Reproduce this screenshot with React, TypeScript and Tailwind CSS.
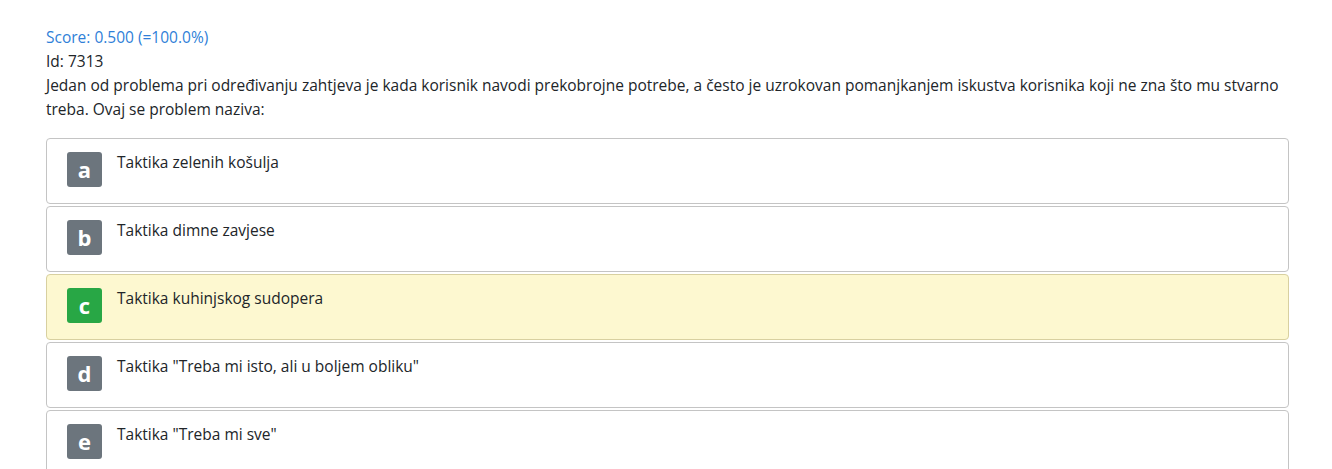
const options = [
  { key: "a", text: "Taktika zelenih košulja" },
  { key: "b", text: "Taktika dimne zavjese" },
  { key: "c", text: "Taktika kuhinjskog sudopera", correct: true },
  { key: "d", text: 'Taktika "Treba mi isto, ali u boljem obliku"' },
  { key: "e", text: 'Taktika "Treba mi sve"' },
];

function Option({ letter, text, correct }: { letter: string; text: string; correct?: boolean }) {
  return (
    <div
      className={
        correct
          ? "flex items-start rounded-[4px] border border-[#d8d0a0] bg-[#fdf8d0] pl-[20px] pt-[13px] pb-[16px]"
          : "flex items-start rounded-[4px] border border-[#c4c4c4] bg-white pl-[20px] pt-[13px] pb-[16px]"
      }
    >
      <div
        className={
          correct
            ? "flex h-[35px] w-[35px] shrink-0 items-center justify-center rounded-[3px] bg-[#28a745] text-[22px] font-bold text-white"
            : "flex h-[35px] w-[35px] shrink-0 items-center justify-center rounded-[3px] bg-[#6c757d] text-[22px] font-bold text-white"
        }
      >
        {letter}
      </div>
      <div className="ml-[15px] -mt-[2px] text-[15.5px] leading-[24px] text-[#212529]">{text}</div>
    </div>
  );
}

export default function App() {
  return (
    <div className="min-h-screen bg-white font-['Open_Sans',sans-serif]">
      <div className="w-[1289px] pl-[46px] pt-[25px]">
        <div className="text-[15.5px] leading-[24px] text-[#2f7fd8]">Score: 0.500 (=100.0%)</div>
        <div className="text-[15.5px] leading-[24px] text-[#212529]">Id: 7313</div>
        <p className="text-[15.5px] leading-[24px] text-[#212529]">
          Jedan od problema pri određivanju zahtjeva je kada korisnik navodi prekobrojne potrebe, a često je uzrokovan
          pomanjkanjem iskustva korisnika koji ne zna što mu stvarno treba. Ovaj se problem naziva:
        </p>
        <div className="mt-[17px] flex flex-col gap-[2px]">
          {options.map((o) => (
            <Option key={o.key} letter={o.key} text={o.text} correct={o.correct} />
          ))}
        </div>
      </div>
    </div>
  );
}
